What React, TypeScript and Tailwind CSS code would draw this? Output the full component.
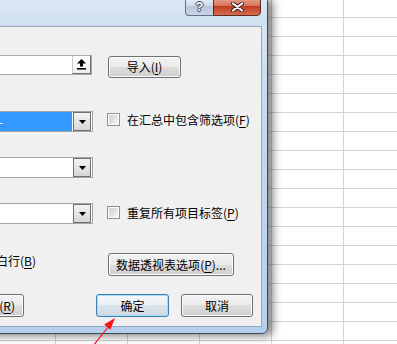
import React from 'react';

// Excel 2010 style dialog sitting over a worksheet, cropped by the window edge

const cjk = "font-['Noto_Sans_CJK_SC','Liberation_Sans',sans-serif]";

const btnBase =
  'flex shrink-0 items-center rounded-[3px] border text-[12px] leading-[14px] text-black';
const btnNormal =
  'border-[#707070] bg-[linear-gradient(#f2f2f2_0%,#ebebeb_50%,#dddddd_50%,#cfcfcf_100%)] shadow-[inset_0_0_0_1px_#fbfbfb]';
const btnDefault =
  'border-[#3c7fb1] bg-[linear-gradient(#f3f7fa_0%,#eaf0f5_50%,#dbe3ea_50%,#d0d9e2_100%)] shadow-[inset_0_0_0_1px_#a9ddf7]';

const Key = ({ k }: { k: string }) => (
  <>
    (<span className="underline underline-offset-[2px]">{k}</span>)
  </>
);

const WinButton = ({
  children,
  className = '',
  isDefault = false,
}: {
  children: React.ReactNode;
  className?: string;
  isDefault?: boolean;
}) => (
  <div className={`${btnBase} ${isDefault ? btnDefault : btnNormal} ${className}`}>
    <span className="whitespace-nowrap">{children}</span>
  </div>
);

const Checkbox = ({ label }: { label: React.ReactNode }) => (
  <div className="flex items-center">
    <div className="h-[13px] w-[13px] shrink-0 border border-[#8e8f8f] bg-white p-[1px]">
      <div className="h-full w-full bg-[linear-gradient(135deg,#cbcfd5,#f6f6f6)]" />
    </div>
    <span className="ml-[7px] whitespace-nowrap text-[12px] leading-[13px] text-black">
      {label}
    </span>
  </div>
);

const ComboBox = ({ selected = false }: { selected?: boolean }) => (
  <div className="flex h-[21px] w-full border border-[#a5a5a5] bg-white pr-[1px]">
    <div
      className={`mr-[1px] flex flex-1 items-center justify-end pr-[69px] ${
        selected ? 'bg-[#3399ff]' : 'bg-white'
      }`}
    >
      {selected && <span className="text-[12px] leading-[14px] text-white">——</span>}
    </div>
    <div className="flex w-[18px] items-center justify-center border border-[#707070] bg-[linear-gradient(#f4f4f4,#d6d6d6)]">
      <svg width="7" height="4" viewBox="0 0 7 4">
        <polygon points="0,0 7,0 3.5,4" fill="#000" />
      </svg>
    </div>
  </div>
);

const Row = ({
  left,
  right,
  className = '',
}: {
  left?: React.ReactNode;
  right?: React.ReactNode;
  className?: string;
}) => (
  <div className={`flex shrink-0 ${className}`}>
    <div className="flex w-[288px] shrink-0">{left}</div>
    <div className="ml-[14px] w-[146px] shrink-0">{right}</div>
  </div>
);

const Sheet = () => (
  <div className="-ml-[16px] -mt-[1px] flex flex-col">
    {Array.from({ length: 19 }).map((_, r) => (
      <div key={r} className="flex">
        {Array.from({ length: 7 }).map((_, c) => (
          <div
            key={c}
            className="h-[19px] w-[72px] shrink-0 border-b border-r border-[#d4d4d4]"
          />
        ))}
      </div>
    ))}
  </div>
);

const Dialog = () => (
  <div className="absolute right-[129px] top-[-4px] flex w-[480px] flex-col rounded-[6px] border border-[#3a4a5e] bg-[linear-gradient(#dce9f7,#c6daf0_30%,#b6cfed)] pb-[6px] shadow-[5px_2px_9px_rgba(0,0,0,0.5)]">
    {/* title bar */}
    <div className="relative h-[29px] shrink-0 rounded-t-[5px] bg-[linear-gradient(#dde9f6,#cfdff1)]">
      <div className="absolute right-[6px] top-0 flex h-[19px]">
        <div className="flex w-[28px] items-center justify-center rounded-bl-[4px] border border-r-0 border-[#5f6f84] bg-[linear-gradient(#eaf0f7,#cfdae7_45%,#b7c7da_50%,#c7d5e5)]">
          <span className="font-['Liberation_Sans',sans-serif] text-[13px] font-bold leading-[13px] text-white [text-shadow:1px_0_0_#3b4656,-1px_0_0_#3b4656,0_1px_0_#3b4656,0_-1px_0_#3b4656]">
            ?
          </span>
        </div>
        <div className="flex w-[48px] items-center justify-center rounded-br-[4px] border border-[#5b2c22] bg-[linear-gradient(#eaa796,#d6735d_45%,#c23e23_50%,#d46c52)]">
          <svg width="13" height="10" viewBox="0 0 13 10">
            <path d="M2 1.5 L11 8.5 M11 1.5 L2 8.5" stroke="#3d1b14" strokeWidth="4" strokeLinecap="round" />
            <path d="M2 1.5 L11 8.5 M11 1.5 L2 8.5" stroke="#ffffff" strokeWidth="2.2" strokeLinecap="round" />
          </svg>
        </div>
      </div>
    </div>

    {/* client area */}
    <div className={`mx-[5px] flex flex-col border border-[#98a9be] bg-[#f0f0f0] pb-[9px] pl-[10px] pr-[8px] pt-[28px] ${cjk}`}>
      <Row
        className="h-[23px]"
        left={
          <div className="mr-[1px] flex h-[20px] w-full border border-[#a9a9a9] bg-white">
            <div className="flex-1" />
            <div className="flex w-[19px] items-center justify-center border-b border-l border-r border-b-[#6f6f6f] border-l-[#c8c8c8] border-r-[#6f6f6f] bg-[linear-gradient(#ffffff,#eeeeee)]">
              <svg width="9" height="11" viewBox="0 0 9 11">
                <polygon points="4.5,0 9,4.5 0,4.5" fill="#000" />
                <rect x="3" y="4" width="3" height="3.5" fill="#000" />
                <rect x="0" y="9" width="9" height="1.6" fill="#000" />
              </svg>
            </div>
          </div>
        }
        right={
          <WinButton className="ml-[1px] mt-[1px] h-[22px] w-[73px] justify-center">
            导入<Key k="I" />
          </WinButton>
        }
      />

      <Row
        className="mt-[33px] h-[21px]"
        left={<ComboBox selected />}
        right={
          <div className="mt-[2px]">
            <Checkbox label={<>在汇总中包含筛选项<Key k="F" /></>} />
          </div>
        }
      />

      <Row className="mt-[25px] h-[21px]" left={<ComboBox />} />

      <Row
        className="mt-[25px] h-[21px]"
        left={<ComboBox />}
        right={
          <div className="mt-[3px]">
            <Checkbox label={<>重复所有项目标签<Key k="P" /></>} />
          </div>
        }
      />

      <Row
        className="mt-[29px] h-[23px]"
        left={
          <div className="mt-[1px] w-[231px] shrink-0 whitespace-nowrap text-right text-[12px] leading-[14px] text-black">
            在每个项目后插入空白行<Key k="B" />
          </div>
        }
        right={
          <WinButton className="ml-[1px] h-[23px] w-[126px] justify-center">
            数据透视表选项<Key k="P" />...
          </WinButton>
        }
      />

      <div className="mt-[18px] flex h-[23px] shrink-0">
        <div className="flex w-[219px] shrink-0 justify-end">
          <WinButton className="h-[23px] w-[73px] justify-end pr-[8px]">
            全部重置<Key k="R" />
          </WinButton>
        </div>
        <div className="w-[72px] shrink-0" />
        <WinButton isDefault className="h-[23px] w-[73px] justify-center">
          确定
        </WinButton>
        <WinButton className="ml-[12px] h-[23px] w-[72px] justify-center">取消</WinButton>
      </div>
    </div>
  </div>
);

export default function App() {
  return (
    <div className="relative h-[344px] w-[397px] overflow-hidden bg-white">
      <Sheet />
      <Dialog />
      <svg
        className="pointer-events-none absolute left-0 top-0"
        width="397"
        height="344"
        viewBox="0 0 397 344"
      >
        <line x1="93" y1="346" x2="109" y2="326" stroke="#ff1010" strokeWidth="1.2" />
        <polygon points="115,318 110.3,329.8 104.2,324.6" fill="#ff1010" />
      </svg>
    </div>
  );
}
